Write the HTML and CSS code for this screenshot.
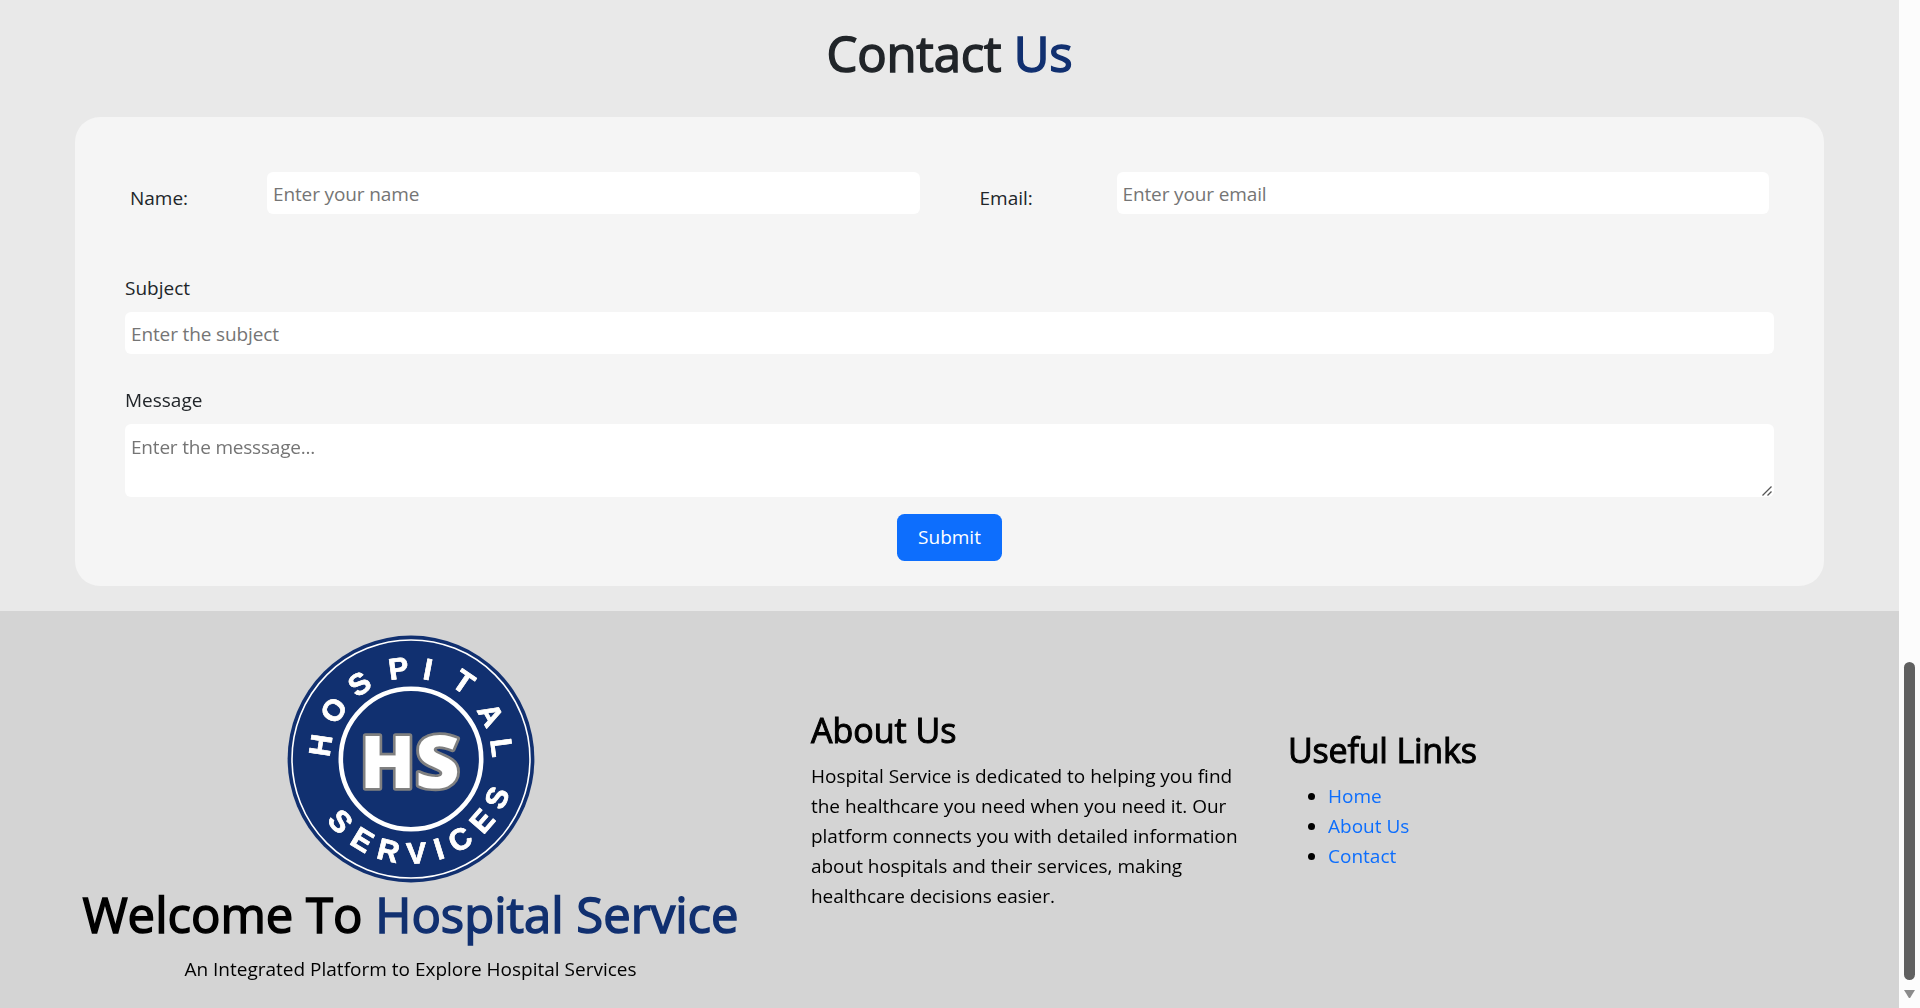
FILE: index.html
```html
<!DOCTYPE html>
<html lang="en">
<head>
<meta charset="utf-8">
<title>Hospital Service</title>
<link rel="stylesheet" href="styles.css">
</head>
<body>
<div class="page">
  <main class="contact">
    <h1 class="title">Contact <span class="brand">Us</span></h1>
    <form class="card">
      <div class="pair">
        <div class="inline-field"><label for="name">Name:</label><input id="name" class="control" placeholder="Enter your name"></div>
        <div class="inline-field"><label for="email">Email:</label><input id="email" class="control" placeholder="Enter your email"></div>
      </div>
      <div class="field"><label for="subject">Subject</label><input id="subject" class="control" placeholder="Enter the subject"></div>
      <div class="field area-field">
        <label for="message">Message</label>
        <textarea id="message" class="control area" placeholder="Enter the messsage..."></textarea>
        <svg class="grip" viewBox="0 0 10 10" aria-hidden="true"><path d="M.5 9.5l9-9M5.5 9.5l4-4"/></svg>
      </div>
      <button class="submit" type="button">Submit</button>
    </form>
  </main>
  <footer class="footer">
    <section class="welcome">
      <svg class="logo" viewBox="-124 -124 248 248" role="img" aria-label="Hospital Services">
        <circle class="disc" r="123.4"/>
        <circle class="ring-thin" r="119"/>
        <circle class="ring" r="70.2"/>
        <g class="arc">
          <text transform="rotate(-81.4) translate(0 -91.5)" y="10.5">H</text>
          <text transform="rotate(-57.7) translate(0 -91.5)" y="10.5">O</text>
          <text transform="rotate(-34.5) translate(0 -91.5)" y="10.5">S</text>
          <text transform="rotate(-7.8) translate(0 -91.5)" y="10.5">P</text>
          <text transform="rotate(10.7) translate(0 -91.5)" y="10.5">I</text>
          <text transform="rotate(34.3) translate(0 -93.5)" y="10.5">T</text>
          <text transform="rotate(61) translate(0 -91.5)" y="10.5">A</text>
          <text transform="rotate(82.7) translate(0 -91.5)" y="10.5">L</text>
          <text transform="rotate(48.5) translate(0 94)" y="10.5">S</text>
          <text transform="rotate(31) translate(0 94)" y="10.5">E</text>
          <text transform="rotate(13.8) translate(0 94)" y="10.5">R</text>
          <text transform="rotate(-3.3) translate(0 94)" y="10.5">V</text>
          <text transform="rotate(-17.3) translate(0 94)" y="10.5">I</text>
          <text transform="rotate(-31.5) translate(0 94)" y="10.5">C</text>
          <text transform="rotate(-48.9) translate(0 94)" y="10.5">E</text>
          <text transform="rotate(-65.7) translate(0 94)" y="10.5">S</text>
        </g>
        <g class="mono">
          <text x="-23.5" y="29">H</text>
          <text transform="translate(26.5 29) scale(1.07 1)">S</text>
        </g>
      </svg>
      <h1 class="headline">Welcome To <span class="brand">Hospital Service</span></h1>
      <p class="tagline">An Integrated Platform to Explore Hospital Services</p>
    </section>
    <section class="about">
      <h2>About Us</h2>
      <p>Hospital Service is dedicated to helping you find<br>the healthcare you need when you need it. Our<br>platform connects you with detailed information<br>about hospitals and their services, making<br>healthcare decisions easier.</p>
    </section>
    <section class="links">
      <h2>Useful Links</h2>
      <ul>
        <li><a href="#">Home</a></li>
        <li><a href="#">About Us</a></li>
        <li><a href="#">Contact</a></li>
      </ul>
    </section>
  </footer>
</div>
<aside class="scrollbar"><div class="thumb"></div><div class="arrow"></div></aside>
</body>
</html>
```
FILE: styles.css
```css
* { box-sizing: border-box; }
body {
  margin: 0;
  height: 1008px;
  display: flex;
  overflow: hidden;
  background: #fcfcfc;
  color: #212529;
  font: 19px/30px "Open Sans", "Noto Sans", sans-serif;
}
h1, h2, p, ul { margin: 0; }
h1, h2 { font-weight: 400; }
h1 { -webkit-text-stroke: 1.5px currentColor; }
h2 { -webkit-text-stroke: 1px currentColor; }
.page { width: 1899px; display: flex; flex-direction: column; }

/* Contact form */
.contact {
  height: 611px;
  padding: 23px 75px 25px;
  background: #e9e9e9;
}
.title { height: 60px; font-size: 49px; line-height: 60px; text-align: center; letter-spacing: -.2px; }
.brand { color: #113070; }
.card {
  height: 469px;
  margin-top: 34px;
  padding: 55px 50px 25px;
  border-radius: 25px;
  background: #f5f5f5;
  display: flex;
  flex-direction: column;
}
.pair { display: flex; gap: 60px; padding: 0 5px; margin-bottom: 59px; }
.inline-field { flex: 1; display: flex; }
.inline-field label { width: 137px; padding-top: 11px; }
.field { display: flex; flex-direction: column; gap: 9px; margin-bottom: 31px; }
.control {
  flex: 1;
  min-width: 0;
  height: 42px;
  padding: 7px 6px 5px;
  border: 0;
  border-radius: 6px;
  background: #fff;
  color: #212529;
  font: inherit;
}
.field .control { flex: none; }
.control::placeholder { color: #757575; opacity: 1; letter-spacing: -.13px; }
.area-field { position: relative; }
.area { height: 73px; padding-top: 8px; resize: none; overflow: hidden; }
.area::placeholder { letter-spacing: -.2px; }
.grip {
  position: absolute;
  right: 2px;
  bottom: 1px;
  width: 10px;
  height: 10px;
  fill: none;
  stroke: #555;
  stroke-width: 1.3;
}
.submit {
  width: 105px;
  height: 47px;
  margin-top: -14px;
  padding: 0 0 1px;
  align-self: center;
  border: 0;
  border-radius: 7.5px;
  background: #0d6efd;
  color: #fff;
  font: inherit;
}

/* Footer */
.footer {
  flex: 1;
  display: flex;
  background: #d4d4d4;
  color: #000;
}
.welcome {
  width: 811px;
  padding: 24px 0 0 10px;
  display: flex;
  flex-direction: column;
  align-items: center;
}
.logo { width: 248px; height: 248px; display: block; }
.headline { margin-top: 1px; font-size: 49px; line-height: 60px; white-space: nowrap; }
.tagline { margin-top: 10px; }
.about { width: 477px; padding-top: 98px; }
.about p { margin-top: 10px; white-space: nowrap; letter-spacing: -.03px; }
h2 { font-size: 34px; line-height: 42px; }
.links { padding-top: 118px; }
.links h2 { letter-spacing: -.2px; }
.links ul { margin-top: 10px; padding-left: 40px; }
.links a { color: #0d6efd; text-decoration: none; }

/* Logo */
.disc { fill: #113070; }
.ring-thin { fill: none; stroke: #fff; stroke-width: 1.6; }
.ring { fill: none; stroke: #fff; stroke-width: 4.6; }
.arc, .mono { fill: #fff; stroke-linejoin: round; text-anchor: middle; }
.arc { font: bold 30px "Liberation Sans", Arial, sans-serif; stroke: #fff; stroke-width: .7; filter: drop-shadow(0 0 .7px #999); }
.mono { font: 800 72px "Open Sans", sans-serif; stroke: #808080; stroke-width: 5.4; paint-order: stroke; }

/* Scrollbar */
.scrollbar { width: 21px; padding-left: 5px; display: flex; flex-direction: column; }
.thumb { width: 11px; height: 318px; margin-top: 662px; border-radius: 6px; background: #606060; }
.arrow { width: 11px; height: 8px; margin-top: 10px; background: #8b8b8b; clip-path: polygon(0 0, 100% 0, 55% 100%, 45% 100%); }
```
